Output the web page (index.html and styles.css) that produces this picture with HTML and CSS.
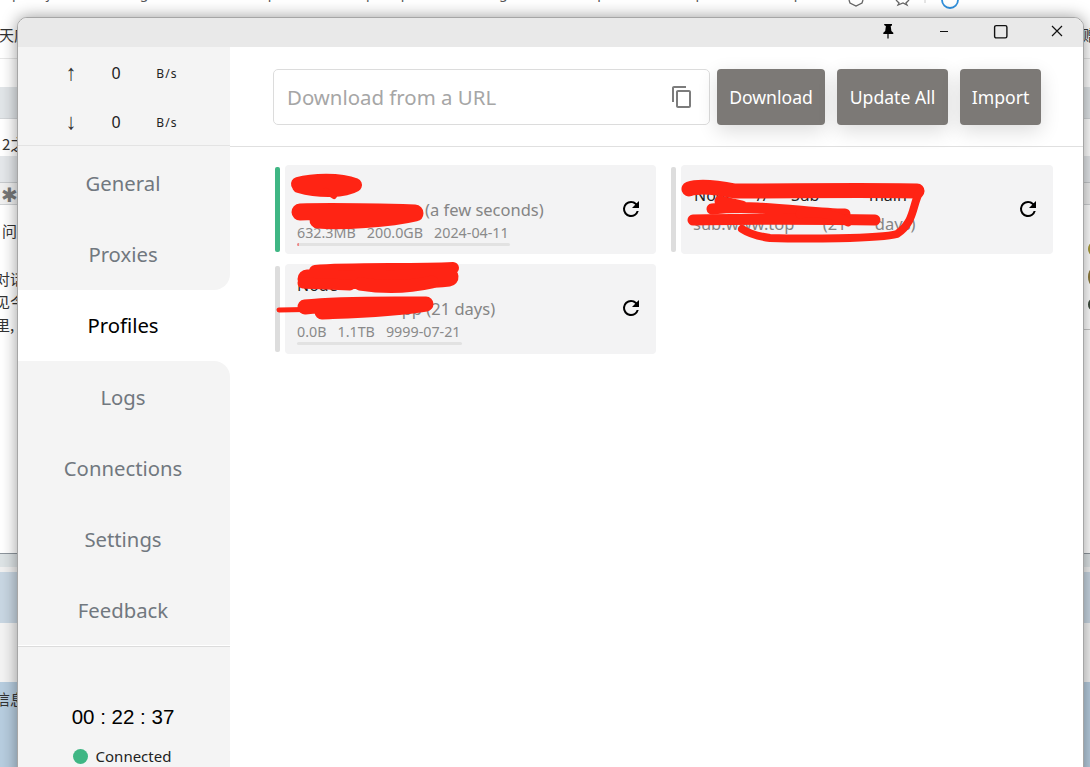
FILE: index.html
```html
<!DOCTYPE html>
<html lang="en">
<head>
<meta charset="utf-8">
<title>Profiles</title>
<link rel="stylesheet" href="styles.css">
</head>
<body>
<div class="desktop">
  <div class="behind">
    <div class="band band-tabs"><span class="clip-text">pj g, p pp g p p p</span></div>
    <div class="band band-links"><span class="cjk">天应</span><span class="cjk cjk-right">赠能</span></div>
    <div class="band band-plain"></div>
    <div class="band band-grey"></div>
    <div class="band band-field"><span class="cjk field-text">2之</span></div>
    <div class="band band-grey2"></div>
    <div class="band band-star"><span class="star">✱</span></div>
    <div class="band band-body">
      <p class="cjk line line-a">问</p>
      <p class="cjk line line-b">对话</p>
      <p class="cjk line line-c">见今</p>
      <p class="cjk line line-d">里,</p>
      <div class="avatars"><i></i><i class="tall"></i><i class="dark"></i></div>
      <div class="rule"></div>
    </div>
    <div class="band band-foot"></div>
    <div class="band band-pale"></div>
    <div class="band band-blue"></div>
    <div class="band band-deep"><span class="cjk">信息</span></div>
  </div>
  <svg class="browser-icons" viewBox="0 0 1090 20" aria-hidden="true">
    <path d="M849 0l1 3 6 3 6-3 1-3" fill="none" stroke="#666" stroke-width="1.3"/>
    <path d="M896 0l3 3-1 2 5-2 4 2-1-2 3-3" fill="none" stroke="#666" stroke-width="1.3"/>
    <path d="M925 0v3" stroke="#ccc"/>
    <path d="M942 0a8 8 0 0 0 16 0" fill="none" stroke="#2f8fdc" stroke-width="1.8"/>
  </svg>

  <div class="window">
    <header class="titlebar">
      <svg class="ctl ctl-pin" viewBox="0 0 16 16" aria-hidden="true"><path d="M4 1h8v1.400l-1.300.6.7 5 1.900 1.700V11H8.600v4.500H7.400V11H3.300V9.700L5.200 8l.7-5L4.600 2.400z" fill="#000"/></svg>
      <svg class="ctl ctl-min" viewBox="0 0 16 16" aria-hidden="true"><path d="M4 8.500h8" stroke="#111" stroke-width="1.200"/></svg>
      <svg class="ctl ctl-max" viewBox="0 0 16 16" aria-hidden="true"><rect x="1.600" y="1.600" width="12.300" height="12.300" rx="1.600" fill="none" stroke="#111" stroke-width="1.400"/></svg>
      <svg class="ctl ctl-close" viewBox="0 0 16 16" aria-hidden="true"><path d="M3 3l10 10M13 3L3 13" stroke="#111" stroke-width="1.200"/></svg>
    </header>
    <div class="main">
      <aside class="sidebar">
        <div class="traffic">
          <div class="traffic-row"><span class="arrow">↑</span><span class="rate">0</span><span class="unit">B/s</span></div>
          <div class="traffic-row"><span class="arrow">↓</span><span class="rate">0</span><span class="unit">B/s</span></div>
        </div>
        <nav class="nav">
          <a class="nav-item upper">General</a>
          <a class="nav-item upper before-active">Proxies</a>
          <a class="nav-item upper active">Profiles</a>
          <a class="nav-item after-active">Logs</a>
          <a class="nav-item">Connections</a>
          <a class="nav-item">Settings</a>
          <a class="nav-item">Feedback</a>
        </nav>
        <div class="status">
          <div class="clock">00 : 22 : 37</div>
          <div class="connected"><span class="dot"></span>Connected</div>
        </div>
      </aside>
      <section class="content">
        <div class="toolbar">
          <div class="url-box">
            <span class="placeholder">Download from a URL</span>
            <svg class="copy" viewBox="0 0 24 24" aria-hidden="true"><path d="M16 1H4c-1.100 0-2 .9-2 2v14h2V3h12V1zm3 4H8c-1.100 0-2 .9-2 2v14c0 1.100.9 2 2 2h11c1.100 0 2-.9 2-2V7c0-1.100-.9-2-2-2zm0 16H8V7h11v14z" fill="#7c7c7c"/></svg>
          </div>
          <button class="btn btn-download">Download</button>
          <button class="btn btn-update">Update All</button>
          <button class="btn btn-import">Import</button>
        </div>
        <div class="profiles">
          <article class="profile selected">
            <span class="mark"></span>
            <div class="card">
              <div class="info">
                <div class="name">Node</div>
                <div class="meta"><span class="host host-a">sub.link</span>(a few seconds)</div>
                <div class="stats"><span>632.3MB</span><span>200.0GB</span><span>2024-04-11</span></div>
                <div class="bar bar-a"><span class="fill"></span></div>
              </div>
              <svg class="refresh" viewBox="0 0 24 24" aria-hidden="true"><path d="M17.650 6.350A7.958 7.958 0 0 0 12 4a8 8 0 1 0 7.730 10h-2.080A5.990 5.990 0 0 1 12 18a6 6 0 1 1 0-12c1.660 0 3.140.69 4.220 1.780L13 11h7V4l-2.350 2.350z"/></svg>
            </div>
          </article>
          <article class="profile">
            <span class="mark"></span>
            <div class="card">
              <div class="info">
                <div class="name name-long">Node // Sub - main</div>
                <div class="meta meta-long"><span class="host">sub.www.top</span> (21 days)</div>
              </div>
              <svg class="refresh" viewBox="0 0 24 24" aria-hidden="true"><path d="M17.650 6.350A7.958 7.958 0 0 0 12 4a8 8 0 1 0 7.730 10h-2.080A5.990 5.990 0 0 1 12 18a6 6 0 1 1 0-12c1.660 0 3.140.69 4.220 1.780L13 11h7V4l-2.350 2.350z"/></svg>
            </div>
          </article>
          <article class="profile">
            <span class="mark"></span>
            <div class="card">
              <div class="info">
                <div class="name">Node</div>
                <div class="meta"><span class="host host-b">mapp</span> (21 days)</div>
                <div class="stats"><span>0.0B</span><span>1.1TB</span><span>9999-07-21</span></div>
                <div class="bar bar-b"></div>
              </div>
              <svg class="refresh" viewBox="0 0 24 24" aria-hidden="true"><path d="M17.650 6.350A7.958 7.958 0 0 0 12 4a8 8 0 1 0 7.730 10h-2.080A5.990 5.990 0 0 1 12 18a6 6 0 1 1 0-12c1.660 0 3.140.69 4.220 1.780L13 11h7V4l-2.350 2.350z"/></svg>
            </div>
          </article>
        </div>
      </section>
    </div>
  </div>

  <svg class="scribbles" viewBox="0 0 1090 767" aria-hidden="true">
    <g fill="none" stroke="#ff2414" stroke-linecap="round" stroke-linejoin="round">
      <path stroke-width="14" d="M298 184C312 180 340 179 355 185C345 191 320 192 299 186"/>
      <path stroke-width="6" d="M326 191l8 5"/>
      <path stroke-width="17" d="M300 212C330 211 380 212 415 213C390 219 340 222 318 220"/>
      <path stroke-width="12" d="M315 271C350 268 410 270 453 268"/>
      <path stroke-width="19" d="M307 279C340 279 400 282 449 277"/>
      <path stroke-width="13" d="M360 284C385 288 410 287 432 282"/>
      <path stroke-width="11" d="M303 283L350 285"/>
      <path stroke-width="5" d="M279 310L330 309"/>
      <path stroke-width="15" d="M305 307C340 303 390 304 426 304C390 310 345 311 322 312"/>
      <path stroke-width="15" d="M689 189C700 185 720 188 735 191C790 191 870 190 917 191"/>
      <path stroke-width="11" d="M720 201L742 206M712 209C760 204 810 214 845 214"/>
      <path stroke-width="11" d="M693 220C730 219 830 219 875 220"/>
      <path stroke-width="8" d="M920 191C912 205 915 222 897 234C880 239 800 239 770 238C755 236 748 233 742 229"/>
      <path stroke-width="9" d="M800 214C815 211 835 214 848 222"/>
    </g>
  </svg>
</div>
</body>
</html>
```
FILE: styles.css
```css
* { box-sizing: border-box; }
html, body { margin: 0; height: 100%; overflow: hidden; background: #fff; }
body { font-family: "Noto Sans", "Noto Sans CJK SC", sans-serif; }

.desktop { position: relative; width: 1090px; height: 767px; overflow: hidden; }

/* page behind the window */
.behind { display: flex; flex-direction: column; height: 767px; }
.band { position: relative; flex: none; overflow: hidden; }
.band-tabs { height: 17px; }
.clip-text { position: absolute; left: 12px; top: -17px; font-size: 14px; word-spacing: 34px; letter-spacing: 26px; color: #555; white-space: nowrap; }
.band-links { height: 42px; border-bottom: 1px solid #e6e6e6; }
.band-links .cjk { position: absolute; left: -1px; top: 8px; }
.band-links .cjk-right { left: 1082px; }
.band-plain { height: 28px; }
.band-grey { height: 32px; background: #e1e5e8; border-bottom: 1px solid #d2d5d8; }
.band-field { height: 37px; }
.field-text { position: absolute; left: 2px; top: 15px; font-size: 13px; }
.band-grey2 { height: 27px; background: #e4e7ea; border-bottom: 1px solid #c6c9cc; }
.band-star { height: 22px; background: #f0f0f0; border-bottom: 1px solid #cfd2d4; }
.star { position: absolute; left: 1px; top: 2px; font-size: 20px; line-height: 20px; color: #777; }
.band-body { height: 349px; border-bottom: 1px solid #8d959c; }
.cjk { font-family: "Noto Sans CJK SC", sans-serif; font-size: 15px; line-height: 20px; color: #333; white-space: nowrap; }
.line { position: absolute; margin: 0; }
.line-a { left: 2px; top: 16px; }
.line-b { left: -5px; top: 64px; }
.line-c { left: -5px; top: 87px; }
.line-d { left: -5px; top: 110px; }
.avatars { position: absolute; left: 1088px; top: 38px; display: flex; flex-direction: column; gap: 14px; }
.avatars i { display: block; width: 8px; height: 12px; border-radius: 50%; background: #a89a3a; }
.avatars .tall { height: 16px; background: #8d7a3c; }
.avatars .dark { height: 11px; background: #3c4a3c; }
.rule { position: absolute; left: 1083px; top: 124px; width: 7px; height: 1px; background: #c8c8c8; }
.band-foot { height: 18px; background: linear-gradient(#dde3e5 72%, #f0f0f0 72%); }
.band-pale { height: 51px; background: #c8d6e2; }
.band-blue { height: 59px; background: #f3f3f3; }
.band-deep { flex: 1; background: #b7cddf; }
.band-deep .cjk { position: absolute; left: -5px; top: 7px; }

.browser-icons { position: absolute; left: 0; top: 0; width: 1090px; height: 20px; }

/* app window */
.window {
  position: absolute; left: 17px; top: 17px; width: 1067px; height: 770px;
  display: flex; flex-direction: column; background: #fff;
  border: 1px solid #a6a6a6; border-radius: 10px 10px 0 0;
  box-shadow: 0 0 16px rgba(0, 0, 0, .4); overflow: hidden;
}
.titlebar { position: relative; flex: none; height: 29px; background: #e9e9e9; }
.ctl { position: absolute; top: 5px; width: 16px; height: 16px; }
.ctl-pin { left: 862px; top: 5px; }
.ctl-min { left: 918px; top: 5px; }
.ctl-max { left: 975px; top: 6px; }
.ctl-close { left: 1031px; top: 5px; }

.main { flex: 1; display: flex; min-height: 0; }

/* sidebar */
.sidebar { flex: none; width: 212px; display: flex; flex-direction: column; background: #f4f4f4; color: #000; }
.traffic { height: 99px; border-bottom: 1px solid #e3e3e3; padding-top: 1px; display: flex; flex-direction: column; }
.traffic-row { flex: none; height: 49px; display: grid; grid-template-columns: 46px 44px 58px 1fr; padding-left: 30px; align-items: center; font-size: 16px; color: #222; }
.arrow { text-align: center; font-family: "Liberation Sans", sans-serif; font-size: 22px; line-height: 1; color: #333; }
.rate { text-align: center; }
.unit { font-size: 12px; letter-spacing: 1.2px; text-align: center; padding-top: 1px; }
.nav { flex: none; height: 500px; padding-top: 2px; background: #fff; background-image: linear-gradient(#f4f4f4 0 3px, transparent 3px); }
.nav-item { display: flex; align-items: center; justify-content: center; height: 71px; padding: 0 2px 0 0; font-size: 20.3px; color: #71787f; background: #f4f4f4; }
.nav-item.upper { padding-bottom: 1px; }
.nav-item.before-active { border-bottom-right-radius: 16px; }
.nav-item.after-active { border-top-right-radius: 16px; }
.nav-item.active { background: #fff; color: #000; }
.status { flex: 1; border-top: 1px solid #dcdcdc; display: flex; flex-direction: column; align-items: center; padding: 55px 2px 0 0; }
.clock { font-family: "Liberation Sans", sans-serif; font-size: 20.5px; line-height: 30px; color: #000; }
.connected { display: flex; align-items: center; gap: 8px; margin: 14px 2px 0 0; font-size: 15px; line-height: 20px; color: #222; }
.dot { width: 15px; height: 15px; border-radius: 50%; background: #3fb684; }

/* content */
.content { flex: 1; min-width: 0; background: #fff; }
.toolbar { height: 100px; border-bottom: 1px solid #e0e0e0; padding: 22px 0 0 43px; display: flex; align-items: flex-start; }
.url-box { width: 437px; height: 56px; border: 1px solid #dcdcdc; border-radius: 5px; display: flex; align-items: center; justify-content: space-between; padding: 0 15px 0 13px; }
.placeholder { font-size: 20.4px; color: #a6a6a6; }
.copy { width: 24px; height: 24px; }
.btn { height: 56px; border: 0; border-radius: 4px; background: #7c7976; color: #fff; font: inherit; font-size: 17.6px; box-shadow: 0 6px 20px rgba(0, 0, 0, .14); padding: 0; }
.btn-download { width: 108px; margin-left: 7px; }
.btn-update { width: 111px; margin-left: 12px; }
.btn-import { width: 81px; margin-left: 12px; }

.profiles { display: grid; grid-template-columns: 381px 382px; grid-template-rows: 89px 90px; gap: 10px 15px; padding: 18px 0 0 45px; }
.profile { display: flex; gap: 5px; min-width: 0; }
.mark { flex: none; width: 5px; margin: 2px 0; border-radius: 2px; background: #dddddd; }
.selected .mark { background: #3fb684; }
.card { flex: 1; min-width: 0; display: flex; align-items: center; justify-content: space-between; padding: 0 13px 0 12px; background: #f3f3f4; border-radius: 4px; }
.info { flex: 1; min-width: 0; }
.name { font-size: 16px; line-height: 24px; color: #222; white-space: nowrap; }
.name-long { padding-left: 1px; word-spacing: 18px; }
.meta { font-size: 16.500px; line-height: 24px; color: #858585; white-space: nowrap; }
.meta-long { word-spacing: 24px; padding-top: 5px; }
.host { display: inline-block; }
.host-a { width: 128px; }
.host-b { width: 125px; text-align: right; }
.stats { display: flex; gap: 11px; height: 20px; padding-top: 1px; font-size: 14.300px; line-height: 19px; color: #8a8a8a; white-space: nowrap; }
.bar { height: 3px; margin-top: 1px; border-radius: 2px; background: #e2e2e2; overflow: hidden; }
.bar-a { width: 213px; }
.bar-b { width: 165px; }
.fill { display: block; width: 2px; height: 100%; background: #e88; }
.refresh { flex: none; width: 24px; height: 24px; margin-bottom: 2px; fill: #000; }

.scribbles { position: absolute; left: 0; top: 0; width: 1090px; height: 767px; pointer-events: none; }
```
